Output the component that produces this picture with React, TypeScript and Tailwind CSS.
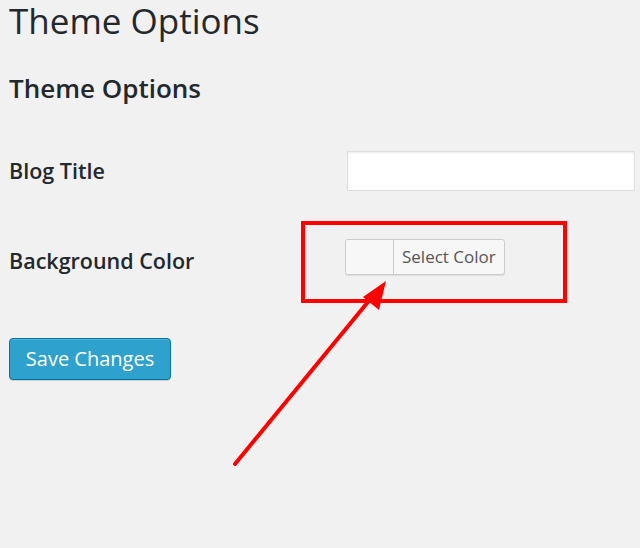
import React from "react";

export default function App() {
  return (
    <div
      className="relative w-[640px] h-[548px] bg-[#f1f1f1] overflow-hidden"
      style={{ fontFamily: '"Open Sans", "Liberation Sans", sans-serif' }}
    >
      <div className="pl-[9px]">
        <h1 className="text-[35px] leading-[42px] text-[#23282d] font-normal">
          Theme Options
        </h1>
        <h2 className="mt-[29px] text-[26px] leading-[34px] font-semibold text-[#23282d]">
          Theme Options
        </h2>
        <div className="mt-[46px] flex items-center h-[40px]">
          <div className="w-[338px] text-[21.5px] font-semibold text-[#23282d] pt-[1px]">Blog Title</div>
          <div className="w-[288px] h-[40px] bg-white border border-[#dddddd] shadow-[inset_0_1px_2px_rgba(0,0,0,0.07)]" />
        </div>
        <div className="mt-[48px] flex items-center h-[36px]">
          <div className="w-[336px] text-[21.5px] font-semibold text-[#23282d] pt-[8px]">Background Color</div>
          <div className="flex h-[36px] rounded-[3px] border border-[#cccccc] shadow-[0_1px_0_rgba(0,0,0,0.08)] bg-[#f7f7f7] overflow-hidden">
            <div className="w-[48px] h-full bg-[#f7f7f7] border-r border-[#cccccc]" />
            <div className="px-[8px] flex items-center text-[17px] text-[#555555]">Select Color</div>
          </div>
        </div>
        <div className="mt-[63px]">
          <button className="h-[42px] w-[162px] rounded-[4px] bg-[#2ea2cc] border border-[#0074a2] shadow-[inset_0_1px_0_rgba(120,200,230,0.5),0_1px_0_rgba(0,0,0,0.15)] text-white text-[20px] leading-none">
            Save Changes
          </button>
        </div>
      </div>
      <svg className="absolute left-0 top-0" width="640" height="548" viewBox="0 0 640 548">
        <rect x="303" y="223" width="262" height="78" fill="none" stroke="#ff0000" strokeWidth="4" />
        <line x1="235" y1="464" x2="372" y2="297" stroke="#ff0000" strokeWidth="4" strokeLinecap="round" />
        <polygon points="386,281 363,297 379,310" fill="#ff0000" />
      </svg>
    </div>
  );
}
